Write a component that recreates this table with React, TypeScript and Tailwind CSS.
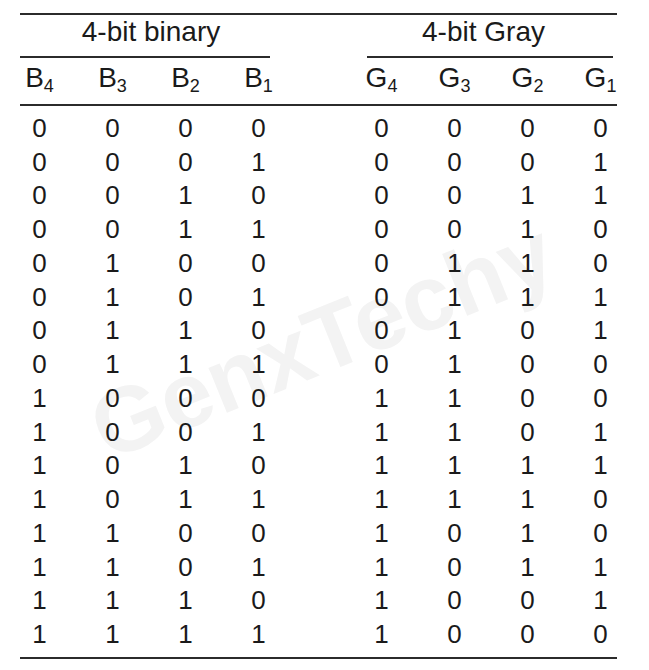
import React from 'react';

const rows = Array.from({ length: 16 }, (_, n) => {
  const b = [3, 2, 1, 0].map((i) => (n >> i) & 1);
  const g = [b[0], b[0] ^ b[1], b[1] ^ b[2], b[2] ^ b[3]];
  return { b, g };
});

function Cell({ children }: { children: React.ReactNode }) {
  return <div className="w-[73px] text-center">{children}</div>;
}

function Head({ letter, sub }: { letter: string; sub: number }) {
  return (
    <Cell>
      {letter}
      <sub className="text-[18px]">{sub}</sub>
    </Cell>
  );
}

export default function App() {
  return (
    <div className="relative w-[649px] h-[670px] overflow-hidden bg-white text-[#1a1a1a] font-['Liberation_Sans',Arial,sans-serif]">
      {/* watermark */}
      <div className="absolute left-[322px] top-[340px] -translate-x-1/2 -translate-y-1/2 -rotate-[22deg] whitespace-nowrap text-[92px] font-bold leading-none text-[#f3f3f3] select-none">
        GenxTechy
      </div>

      <div className="relative pt-[13px]">
        <div className="ml-[20px] w-[597px] h-[2px] bg-[#2b2b2b]" />

        {/* group titles */}
        <div className="flex">
          <div className="ml-[20px] w-[250px]">
            <div className="mt-[1px] pl-[12px] text-center text-[28px] leading-[32px]">4-bit binary</div>
            <div className="mt-[8px] h-[2px] bg-[#2b2b2b]" />
          </div>
          <div className="ml-[97px] w-[246px]">
            <div className="mt-[1px] pr-[13px] text-center text-[28px] leading-[32px]">4-bit Gray</div>
            <div className="mt-[8px] h-[2px] bg-[#2b2b2b]" />
          </div>
        </div>

        {/* column heads */}
        <div className="flex ml-[3px] pt-[4px] h-[46px] text-[28px] leading-[32px]">
          <Head letter="B" sub={4} />
          <Head letter="B" sub={3} />
          <Head letter="B" sub={2} />
          <Head letter="B" sub={1} />
          <div className="w-[50px]" />
          <Head letter="G" sub={4} />
          <Head letter="G" sub={3} />
          <Head letter="G" sub={2} />
          <Head letter="G" sub={1} />
        </div>
        <div className="ml-[20px] w-[597px] h-[2px] bg-[#2b2b2b]" />

        {/* data rows */}
        <div className="ml-[3px] pt-[6px] text-[26px] leading-[33.73px]">
          {rows.map((r, i) => (
            <div key={i} className="flex">
              {r.b.map((v, j) => (
                <Cell key={j}>{v}</Cell>
              ))}
              <div className="w-[50px]" />
              {r.g.map((v, j) => (
                <Cell key={j}>{v}</Cell>
              ))}
            </div>
          ))}
        </div>
        <div className="mt-[5px] ml-[20px] w-[597px] h-[2px] bg-[#2b2b2b]" />
      </div>
    </div>
  );
}
